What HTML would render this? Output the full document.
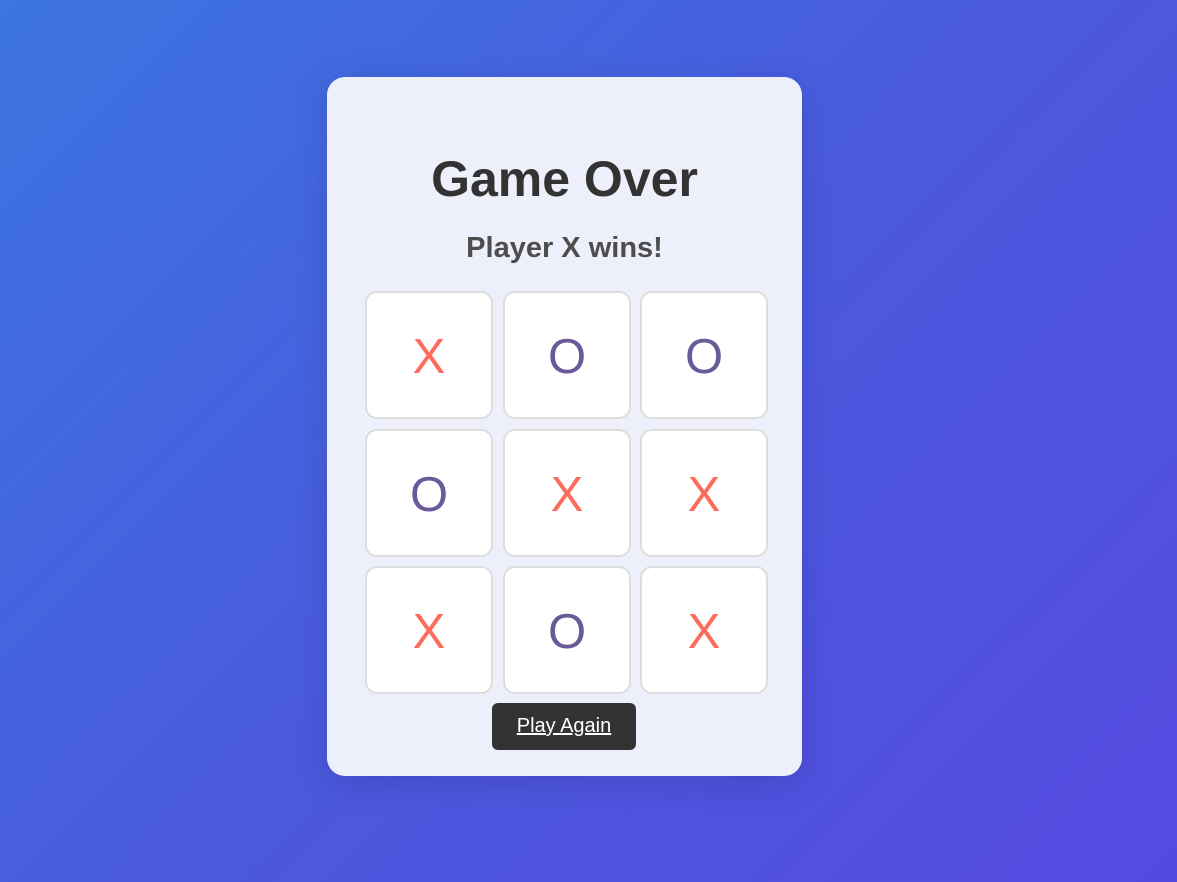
<!DOCTYPE html>
<html><head><style>
html,body{margin:0;width:1177px;height:882px;overflow:hidden}
body{background:linear-gradient(135deg,#3c74e0 0%,#4a5ade 50%,#554ae0 100%);font-family:"Liberation Sans",sans-serif;position:relative}
.card{position:absolute;left:327px;top:77px;width:475px;height:699px;background:#edeffb;border-radius:18px;box-shadow:0 8px 30px rgba(40,40,120,.25)}
h1{position:absolute;top:149px;left:327px;width:475px;margin:0;text-align:center;font-size:50px;line-height:60px;color:#333;font-weight:bold}
h2{position:absolute;top:229px;left:327px;width:475px;margin:0;text-align:center;font-size:29px;line-height:38px;color:#4d4d4d;font-weight:bold}
.c{position:absolute;width:124px;height:124px;background:#fff;border:2px solid #ddd;border-radius:12px;box-sizing:content-box;text-align:center;line-height:128px;font-size:49px}
.x{color:#ff6b5b}.o{color:#6a5a9a}
.btn{position:absolute;left:492px;top:703px;width:144px;height:47px;background:#333;border-radius:6px;color:#fff;text-decoration:underline;font-size:20px;line-height:47px;text-align:center}
</style></head><body>
<div class="card"></div>
<h1>Game Over</h1>
<h2>Player X wins!</h2>
<div class="c x" style="left:365px;top:291px">X</div>
<div class="c o" style="left:503px;top:291px">O</div>
<div class="c o" style="left:640px;top:291px">O</div>
<div class="c o" style="left:365px;top:429px">O</div>
<div class="c x" style="left:503px;top:429px">X</div>
<div class="c x" style="left:640px;top:429px">X</div>
<div class="c x" style="left:365px;top:566px">X</div>
<div class="c o" style="left:503px;top:566px">O</div>
<div class="c x" style="left:640px;top:566px">X</div>
<div class="btn">Play Again</div>
</body></html>
